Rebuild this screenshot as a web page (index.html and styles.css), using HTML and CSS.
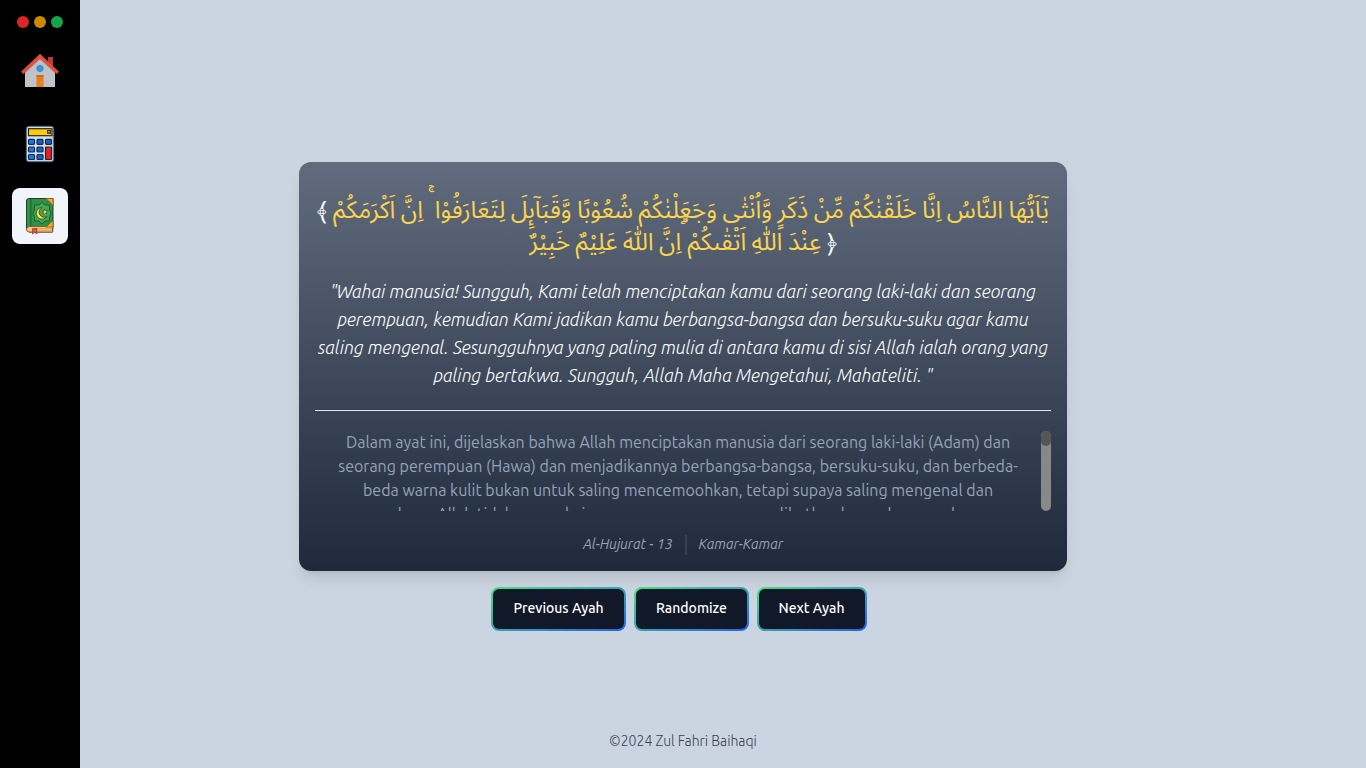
FILE: index.html
```html
<!DOCTYPE html>
<html lang="id">
<head>
<meta charset="utf-8">
<title>Random Ayah</title>
<link rel="stylesheet" href="styles.css">
</head>
<body>
<div class="app">
  <aside class="sidebar">
    <div class="dots"><span class="dot red"></span><span class="dot amber"></span><span class="dot green"></span></div>
    <nav class="nav">
      <a class="nav-item">
        <svg width="40" height="40" viewBox="0 0 40 40">
          <path d="M28 5h5v12h-5z" fill="#b83c33"/>
          <path d="M5 20 20 6l15 14v15H5z" fill="#bdc3c7"/>
          <path d="M5 20 20 6l15 14v1.500L20 8 5 21.500z" fill="#95a5a6" opacity=".6"/>
          <path d="M20 2 1.200 19.800l2.200 2L20 6.500l16.600 15.300 2.200-2z" fill="#e74c3c" stroke="#e74c3c" stroke-width=".4"/>
          <circle cx="20" cy="16.500" r="3.300" fill="#3498db" stroke="#2980b9" stroke-width=".5"/>
          <path d="M16.500 23.500h7V35h-7z" fill="#e67e22"/><path d="M16.500 23.200h7v1.500h-7z" fill="#d35400"/>
          <circle cx="21.500" cy="30" r="1" fill="#f1a40f"/>
        </svg>
      </a>
      <a class="nav-item">
        <svg width="40" height="40" viewBox="0 0 40 40">
          <rect x="6.300" y="2.300" width="27.400" height="35.400" rx="2.800" fill="#cfe2f3" stroke="#4b6078" stroke-width="1"/>
          <path d="M32 5v31H9" fill="none" stroke="#a9c2dc"/>
          <g stroke="#20242c" stroke-width="1.200">
            <rect x="8.500" y="4.700" width="23.500" height="7" fill="#ffcc00"/>
            <g fill="#1479f5">
              <rect x="8.500" y="15.300" width="6" height="5" rx="1"/><rect x="17" y="15.300" width="6" height="5" rx="1" fill="#0963dc"/><rect x="25.500" y="15.300" width="6" height="5" rx="1" fill="#0963dc"/>
              <rect x="8.500" y="23" width="6" height="5" rx="1"/><rect x="17" y="23" width="6" height="5" rx="1" fill="#0963dc"/>
              <rect x="8.500" y="30.500" width="6" height="5" rx="1"/><rect x="17" y="30.500" width="6" height="5" rx="1" fill="#0963dc"/>
            </g>
            <rect x="25.500" y="23" width="6" height="12.500" rx=".7" fill="#ee1c25"/>
            <path d="M30.300 10V6.500h-2.600v2.600h2.600" fill="none"/>
          </g>
        </svg>
      </a>
      <a class="nav-item active">
        <svg width="40" height="40" viewBox="0 0 40 40">
          <path d="M6.500 32V5q0-2.500 2.500-2.500h24V31l-.5 5H9q-2.500-1-2.500-4z" fill="#319044" stroke="#233b33"/>
          <path d="M10.800 3v27.500" stroke="#205f3b" stroke-width="1.200"/>
          <path d="M6.500 33.500q0-3 3.500-3h23q-1.500 3 0 5.500H9.500q-3 0-3-2.500z" fill="#ffc477" stroke="#6c5437" stroke-width=".8"/>
          <path d="M14 32.500h18M18 34.300h14" stroke="#d99645" stroke-width=".7"/>
          <path d="M22 6.500l3 2.500h4.500v5l1.500 3-1.500 4v4H25l-3 3-3-3h-4.500v-4L13 17l1.500-3V9H19z" fill="#43a656" stroke="#195f38"/>
          <path d="M22 11.500a5.800 5.800 0 1 0 4.800 9.200 5 5 0 1 1-4.800-9.200z" fill="#fce23c" stroke="#283d2d" stroke-width=".8"/>
          <path d="m24.500 13 1 1.600 1.900-.2-1.100 1.700.8 1.700-1.800-.4-1.300 1.300-.2-1.900-1.600-.8 1.700-.8z" fill="#fce23c" stroke="#283d2d" stroke-width=".6"/>
          <path d="M26 2.500h7v7zM33 24.500v6.500h-7z" fill="#f9a928" stroke="#755326" stroke-width=".7"/>
          <path d="M12.500 32.500H17V38l-2.200-1.500-2.300 1.500z" fill="#d8573b" stroke="#733b32" stroke-width=".6"/>
        </svg>
      </a>
    </nav>
  </aside>
  <main class="main">
    <section class="card">
      <p class="arabic"><span class="bracket">﴾</span> يٰٓاَيُّهَا النَّاسُ اِنَّا خَلَقْنٰكُمْ مِّنْ ذَكَرٍ وَّاُنْثٰى وَجَعَلْنٰكُمْ شُعُوْبًا وَّقَبَاۤىِٕلَ لِتَعَارَفُوْا<span class="pause"> ۚ</span> اِنَّ اَكْرَمَكُمْ عِنْدَ اللّٰهِ اَتْقٰىكُمْ<span class="pause"> ۗ</span>اِنَّ اللّٰهَ عَلِيْمٌ خَبِيْرٌ <span class="bracket">﴿</span></p>
      <p class="quote">"Wahai manusia! Sungguh, Kami telah menciptakan kamu dari seorang laki-laki dan seorang perempuan, kemudian Kami jadikan kamu berbangsa-bangsa dan bersuku-suku agar kamu saling mengenal. Sesungguhnya yang paling mulia di antara kamu di sisi Allah ialah orang yang paling bertakwa. Sungguh, Allah Maha Mengetahui, Mahateliti. "</p>
      <hr class="rule">
      <div class="tafsir">
        <p class="tafsir-text">Dalam ayat ini, dijelaskan bahwa Allah menciptakan manusia dari seorang laki-laki (Adam) dan seorang perempuan (Hawa) dan menjadikannya berbangsa-bangsa, bersuku-suku, dan berbeda-beda warna kulit bukan untuk saling mencemoohkan, tetapi supaya saling mengenal dan menolong. Allah tidak menyukai orang-orang yang memperlihatkan kesombongan dengan</p>
        <div class="track"><div class="thumb"></div></div>
      </div>
      <div class="meta"><span>Al-Hujurat - 13</span><span class="sep"></span><span>Kamar-Kamar</span></div>
    </section>
    <div class="buttons">
      <button class="btn prev"><span>Previous Ayah</span></button>
      <button class="btn rand"><span>Randomize</span></button>
      <button class="btn next"><span>Next Ayah</span></button>
    </div>
    <footer class="footer">©2024 Zul Fahri Baihaqi</footer>
  </main>
</div>
</body>
</html>
```
FILE: styles.css
```css
* { box-sizing: border-box; margin: 0; padding: 0; }
body { font-family: Ubuntu, "Noto Sans", sans-serif; background: #cbd5e1; }
.app { display: flex; height: 768px; overflow: hidden; }
.sidebar { width: 80px; background: #000; padding-top: 16px; }
.dots { display: flex; justify-content: center; gap: 5px; height: 12px; }
.dot { width: 12px; height: 12px; border-radius: 50%; }
.red { background: #dc2626; }
.amber { background: #ca8a04; }
.green { background: #16a34a; }
.nav { display: flex; flex-direction: column; align-items: center; gap: 16px; padding-top: 16px; }
.nav-item { display: flex; align-items: center; justify-content: center; width: 56px; height: 56px; border-radius: 8px; }
.active { background: #f1f5f9; }
.main { flex: 1; display: flex; flex-direction: column; align-items: center; padding: 162px 80px 0 0; }
.card { width: 768px; height: 409px; padding: 32px 16px 0; border-radius: 12px; background: linear-gradient(#606c7d, #1e293b); box-shadow: 0 10px 15px -3px rgba(0,0,0,.1), 0 4px 6px -4px rgba(0,0,0,.1); text-align: center; }
.arabic { font-family: Ubuntu, "Noto Sans Arabic", sans-serif; font-size: 24px; line-height: 32px; height: 64px; color: #fcd34d; font-weight: 400; }
.bracket { color: #fff; }
/* pause signs sit above the line of letters */
.pause { position: relative; top: -15px; }
.quote { margin-top: 19px; font-size: 18px; line-height: 28px; height: 112px; font-style: italic; font-weight: 300; color: #fff; }
.rule { margin-top: 21px; border: 0; height: 1px; background: #e5e7eb; }
.tafsir { display: flex; margin-top: 20px; height: 80px; overflow: hidden; }
.tafsir-text { flex: 1; margin-top: -1px; padding: 0 16px; font-size: 16px; line-height: 24px; font-weight: 400; color: #94a3b8; }
.track { width: 10px; height: 80px; border-radius: 5px; background: #888; }
.thumb { height: 15px; border-radius: 5px; background: #555; }
.meta { display: flex; justify-content: center; align-items: center; margin-top: 23px; height: 20px; font-size: 14px; line-height: 20px; font-style: italic; font-weight: 400; color: #9ca3af; }
.sep { width: 2px; height: 20px; margin: 1px 12px -1px; background: #374151; }
.buttons { display: flex; gap: 8px; margin: 16px 8px 0 0; }
.btn { height: 44px; padding: 2px; border: 0; border-radius: 8px; background: linear-gradient(to bottom right, #4ade80, #2563eb); font: 500 14px/20px Ubuntu, "Noto Sans", sans-serif; color: #fff; }
.btn span { display: block; height: 40px; padding: 9px 0; border-radius: 6px; background: #111827; }
.prev { width: 135px; }
.rand { width: 115px; }
.next { width: 110px; }
.next span { padding-right: 1px; }
.footer { margin-top: 100px; font-size: 14px; line-height: 20px; font-weight: 300; color: #374151; }
```
